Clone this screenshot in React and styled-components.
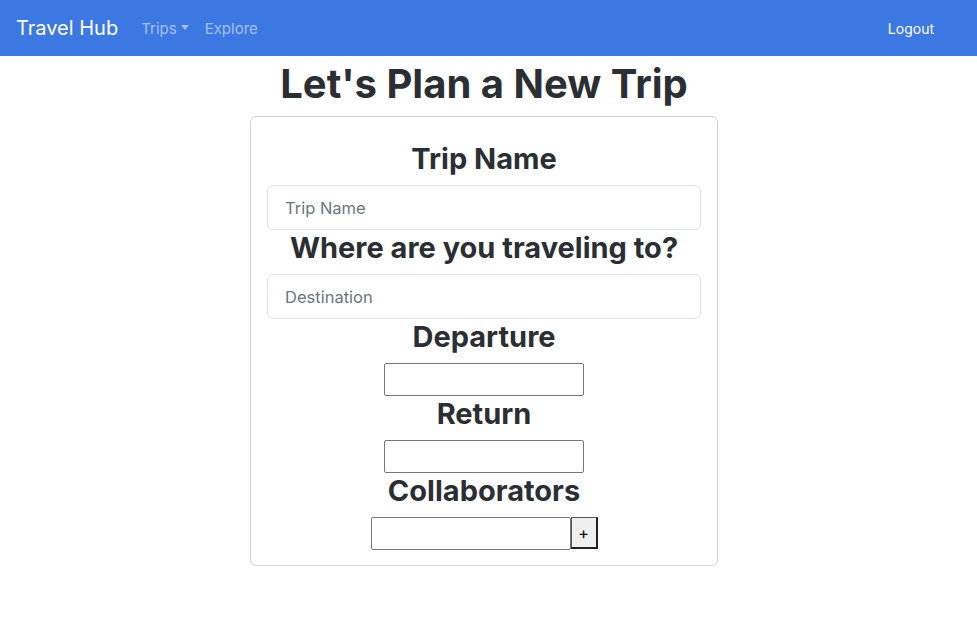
import React from "react"
import styled, { createGlobalStyle } from "styled-components"

const GlobalStyle = createGlobalStyle`
  * { box-sizing: border-box; }
  body {
    margin: 0;
    font-family: Inter, "Noto Sans", sans-serif;
    color: #212529;
    background: #fff;
  }
`

const NavLinks = [
  { title: "Trips", dropdown: true },
  { title: "Explore" },
]

const App = () => {
  return (
    <>
      <GlobalStyle />
      <Navbar>
        <Left>
          <Brand href="#">Travel Hub</Brand>
          {NavLinks.map((item, index) => (
            <NavLink key={index} href="#">
              {item.title}
              {item.dropdown && <Caret />}
            </NavLink>
          ))}
        </Left>
        <Logout href="#">Logout</Logout>
      </Navbar>
      <Main>
        <Title>Let's Plan a New Trip</Title>
        <Card>
          <Label>Trip Name</Label>
          <TextInput placeholder="Trip Name" />
          <Label>Where are you traveling to?</Label>
          <TextInput placeholder="Destination" />
          <Label>Departure</Label>
          <PlainInput />
          <Label>Return</Label>
          <PlainInput />
          <Label>Collaborators</Label>
          <Row>
            <PlainInput />
            <AddButton>+</AddButton>
          </Row>
        </Card>
      </Main>
    </>
  )
}

const Navbar = styled.nav`
  height: 56px;
  background: #3c78e2;
  display: flex;
  align-items: center;
  justify-content: space-between;
  padding: 0 16px;
`

const Left = styled.div`
  display: flex;
  align-items: center;
`

const Brand = styled.a`
  color: #fff;
  font-size: 20px;
  text-decoration: none;
  margin-right: 15px;
`

const NavLink = styled.a`
  color: rgba(255, 255, 255, 0.55);
  font-size: 15px;
  text-decoration: none;
  padding: 8px 8px;
  display: flex;
  align-items: center;
`

const Caret = styled.span`
  display: inline-block;
  margin-left: 4px;
  border-top: 5px solid rgba(255, 255, 255, 0.55);
  border-left: 4px solid transparent;
  border-right: 4px solid transparent;
  margin-top: -2px;
`

const Logout = styled.a`
  color: #fff;
  font-size: 14px;
  text-decoration: none;
  margin-right: 27px;
`

const Main = styled.main`
  display: flex;
  flex-direction: column;
  align-items: center;
  padding-right: 9px;
`

const Title = styled.h1`
  font-size: 40px;
  font-weight: 700;
  line-height: 44px;
  margin: 6px 0 10px;
  color: #2b2f33;
`

const Card = styled.div`
  width: 468px;
  border: 1px solid rgba(0, 0, 0, 0.175);
  border-radius: 6px;
  padding: 24px 16px 15px;
  display: flex;
  flex-direction: column;
  align-items: center;
`

const Label = styled.h2`
  font-size: 29px;
  font-weight: 700;
  line-height: 36px;
  margin: 0 0 8px;
  color: #2b2f33;
  text-align: center;
`

const TextInput = styled.input`
  width: 100%;
  height: 45px;
  padding: 0 17px;
  font-family: inherit;
  font-size: 16.5px;
  color: #212529;
  border: 1px solid #dee2e6;
  border-radius: 6px;
  outline: none;
  &::placeholder {
    color: #6c757d;
  }
`

const PlainInput = styled.input`
  width: 200px;
  height: 33px;
  border: 1px solid #767676;
  border-radius: 2px;
  font-size: 14px;
`

const Row = styled.div`
  display: flex;
`

const AddButton = styled.button`
  width: 27px;
  height: 32px;
  padding: 0;
  background: #efefef;
  color: #000;
  font-family: inherit;
  font-size: 16px;
  border-style: solid;
  border-color: #555 #222 #222 #555;
  border-width: 1px 2px 2px 1px;
  border-radius: 0;
`

export default App
